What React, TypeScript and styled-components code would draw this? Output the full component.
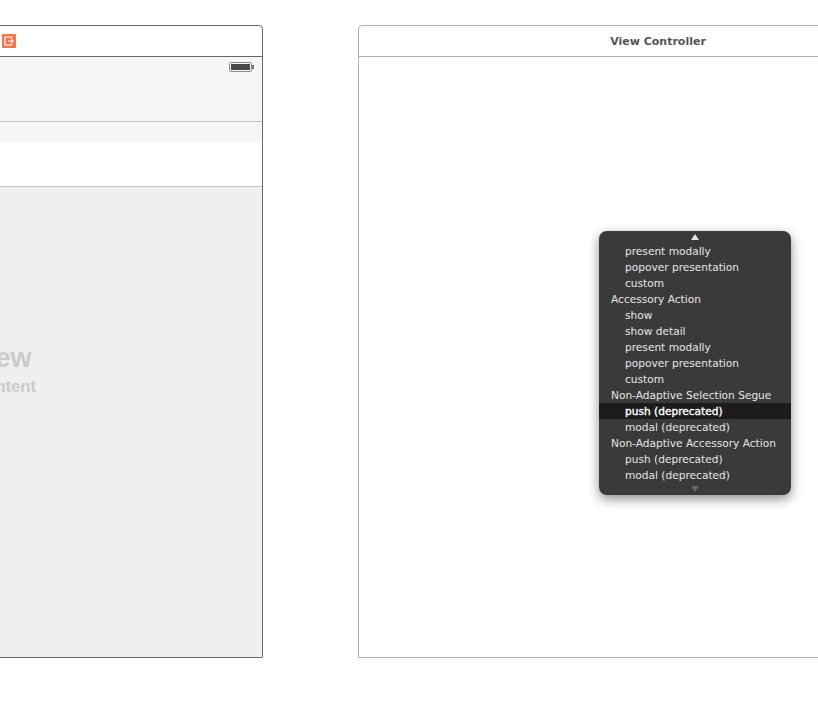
import React from "react";
import styled, { createGlobalStyle } from "styled-components";

const Global = createGlobalStyle`
  html, body { margin: 0; padding: 0; width: 818px; height: 719px; overflow: hidden; background: #fff; }
  #root { width: 818px; height: 719px; overflow: hidden; }
`;

const Canvas = styled.div`
  display: flex;
  gap: 95px;
  width: 1400px;
  margin-left: -337px;
  padding-top: 25px;
  box-sizing: border-box;
`;

const Scene = styled.section<{ $edge: string }>`
  position: relative;
  flex: 0 0 600px;
  height: 633px;
  box-sizing: border-box;
  border: 1px solid ${(p) => p.$edge};
  border-radius: 4px 4px 0 0;
  display: flex;
  flex-direction: column;
  background: #fff;
`;

const Dock = styled.header<{ $edge: string }>`
  flex: 0 0 30px;
  display: flex;
  align-items: center;
  border-bottom: 1px solid ${(p) => p.$edge};
`;

const ExitSlot = styled.div`
  display: flex;
  margin-left: 338px;
`;

const Title = styled.h2`
  flex: 1;
  margin: 2px 0 0;
  text-align: center;
  font: bold 11px/14px "DejaVu Sans", sans-serif;
  color: #555;
`;

const StatusNav = styled.div`
  flex: 0 0 65px;
  box-sizing: border-box;
  display: flex;
  justify-content: flex-end;
  align-items: flex-start;
  padding: 5px 8px 0 0;
  background: #f6f6f6;
  border-bottom: 1px solid #c2c2c2;
`;

const SearchStrip = styled.div`
  flex: 0 0 21px;
  background: #f6f6f6;
`;

const Cell = styled.div`
  flex: 0 0 44px;
  box-sizing: border-box;
  background: #fff;
  border-bottom: 1px solid #c2c2c2;
`;

const TableBody = styled.div`
  flex: 1;
  background: #efefef;
  display: flex;
  flex-direction: column;
  align-items: center;
  padding-top: 155px;
  font-family: "Liberation Sans", Arial, sans-serif;
  font-weight: bold;
  color: #cbcbcb;
  white-space: nowrap;
`;

const BigLabel = styled.div`
  font-size: 27px;
  line-height: 32px;
`;

const SmallLabel = styled.div`
  font-size: 16.8px;
  line-height: 25px;
`;

const Menu = styled.div`
  position: absolute;
  left: 240px;
  top: 205px;
  width: 192px;
  height: 264px;
  background: #3a3a3a;
  border-radius: 8px;
  box-shadow: 0 4px 12px rgba(0, 0, 0, 0.45);
  display: flex;
  flex-direction: column;
  font: 10.6px/16px "DejaVu Sans", sans-serif;
  color: #e6e6e6;
`;

const ScrollZone = styled.div`
  flex: 0 0 12px;
  display: flex;
  align-items: center;
  justify-content: center;
`;

const Arrow = styled.div<{ $down?: boolean }>`
  width: 0;
  height: 0;
  border-left: 4px solid transparent;
  border-right: 4px solid transparent;
  ${(p) =>
    p.$down ? "border-top: 6px solid #6a6a6a;" : "border-bottom: 6px solid #e2e2e2;"}
`;

const MenuRow = styled.div<{ $indent?: boolean; $active?: boolean }>`
  height: 16px;
  padding-left: ${(p) => (p.$indent ? 26 : 12)}px;
  white-space: nowrap;
  line-height: 17px;
  background: ${(p) => (p.$active ? "#1c1c1c" : "transparent")};
  color: ${(p) => (p.$active ? "#ffffff" : "inherit")};
  -webkit-text-stroke: ${(p) => (p.$active ? "0.35px #fff" : "0")};
`;

const items: [string, boolean, boolean?][] = [
  ["present modally", true],
  ["popover presentation", true],
  ["custom", true],
  ["Accessory Action", false],
  ["show", true],
  ["show detail", true],
  ["present modally", true],
  ["popover presentation", true],
  ["custom", true],
  ["Non-Adaptive Selection Segue", false],
  ["push (deprecated)", true, true],
  ["modal (deprecated)", true],
  ["Non-Adaptive Accessory Action", false],
  ["push (deprecated)", true],
  ["modal (deprecated)", true],
];

const ExitIcon = () => (
  <svg width="14" height="14" viewBox="0 0 14 14">
    <rect width="14" height="14" fill="#f3774a" />
    <path d="M9.5 5V3H3v8h6.5V9" fill="none" stroke="#fff" strokeWidth="1.2" />
    <path d="M6 7h6M10 5v4" fill="none" stroke="#fff" strokeWidth="1" />
  </svg>
);

const Battery = () => (
  <svg width="25" height="10" viewBox="0 0 25 10">
    <rect x="0.5" y="0.5" width="22" height="9" rx="1.5" fill="#f6f6f6" stroke="#8a8a8a" />
    <rect x="2" y="2" width="19" height="6" fill="#4a4a4a" />
    <rect x="23" y="3" width="2" height="4" fill="#777" />
  </svg>
);

export default function App() {
  return (
    <>
      <Global />
      <Canvas>
        <Scene $edge="#666666">
          <Dock $edge="#666666">
            <ExitSlot>
              <ExitIcon />
            </ExitSlot>
          </Dock>
          <StatusNav>
            <Battery />
          </StatusNav>
          <SearchStrip />
          <Cell />
          <TableBody>
            <BigLabel>Table View</BigLabel>
            <SmallLabel>Prototype Content</SmallLabel>
          </TableBody>
        </Scene>
        <Scene $edge="#b0b0b0">
          <Dock $edge="#b0b0b0">
            <Title>View Controller</Title>
          </Dock>
          <Menu>
            <ScrollZone>
              <Arrow />
            </ScrollZone>
            {items.map(([label, indent, active], i) => (
              <MenuRow key={i} $indent={indent} $active={active}>
                {label}
              </MenuRow>
            ))}
            <ScrollZone>
              <Arrow $down />
            </ScrollZone>
          </Menu>
        </Scene>
      </Canvas>
    </>
  );
}
